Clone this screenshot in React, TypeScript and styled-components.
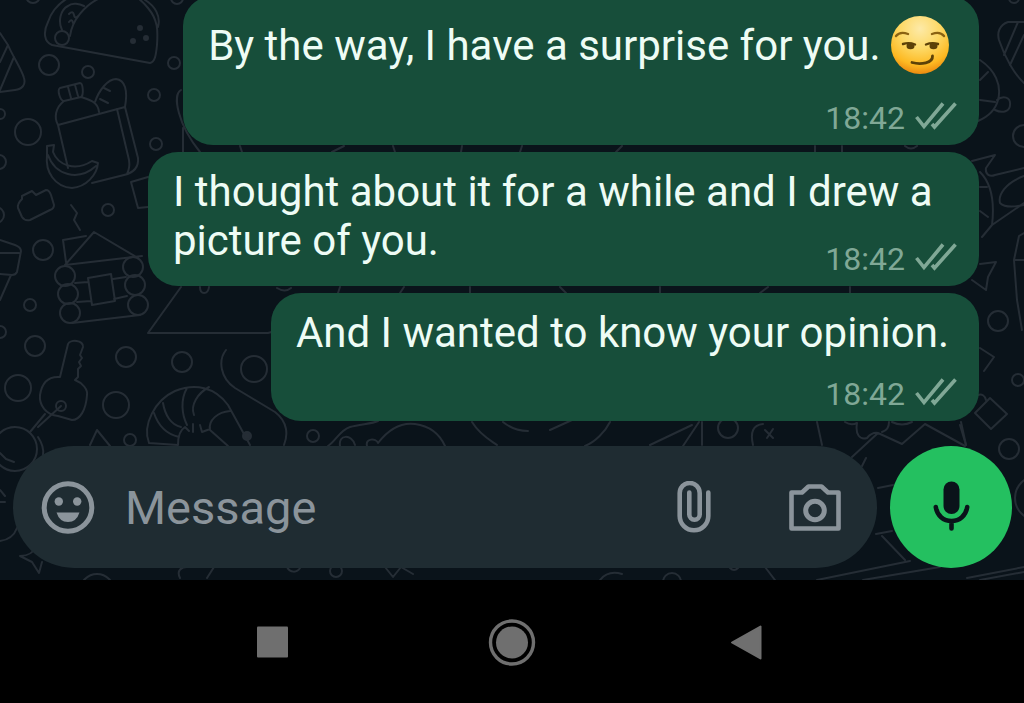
import React from "react";
import styled, { createGlobalStyle } from "styled-components";

const colors = {
  chat: "#0a131a",
  doodle: "#252d35",
  bubble: "#174e3a",
  text: "#eefcf5",
  meta: "#80a896",
  field: "#1f2c32",
  icon: "#8b949b",
  accent: "#24c060",
  nav: "#6f6f6f",
};

const GlobalStyle = createGlobalStyle`
  * { box-sizing: border-box; }
  body {
    margin: 0;
    background: #000;
    font-family: Roboto, "Liberation Sans", sans-serif;
  }
  svg { display: block; flex: none; }
`;

const Screen = styled.div`
  display: flex;
  flex-direction: column;
  height: 100vh;
`;

const Chat = styled.main`
  position: relative;
  flex: 1;
  min-height: 0;
  display: flex;
  flex-direction: column;
  justify-content: flex-end;
  gap: 25px;
  padding-bottom: 12px;
  overflow: hidden;
  background: ${colors.chat};
`;

const Wallpaper = styled.svg`
  position: absolute;
  left: 0;
  bottom: 0;
  fill: none;
  stroke: ${colors.doodle};
  stroke-width: 2;
  stroke-linecap: round;
  stroke-linejoin: round;
`;

const Messages = styled.section`
  position: relative;
  display: flex;
  flex-direction: column;
  align-items: flex-end;
  gap: 7px;
  padding: 0 45px 0 148px;
`;

const Bubble = styled.article`
  display: flex;
  flex-direction: column;
  flex: none;
  padding: 15px 22px 9px 25px;
  border-radius: 30px;
  background: ${colors.bubble};
`;

const BubbleText = styled.p<{ $tall?: boolean }>`
  margin: 0;
  padding-right: 8px;
  color: ${colors.text};
  font-size: 42px;
  line-height: ${(p) => (p.$tall ? 70 : 49)}px;
`;

const Meta = styled.div<{ $inline?: boolean }>`
  display: flex;
  align-items: center;
  align-self: flex-end;
  gap: 10px;
  margin-top: ${(p) => (p.$inline ? -24 : 19)}px;
  color: ${colors.meta};
  font-size: 32px;
  line-height: 36px;
`;

const EmojiSvg = styled.svg`
  display: inline-block;
  vertical-align: -14px;
`;

const Composer = styled.form`
  position: relative;
  display: flex;
  gap: 13px;
  padding: 0 12px 0 13px;
`;

const Field = styled.div`
  flex: 1;
  min-width: 0;
  display: flex;
  align-items: center;
  height: 122px;
  padding: 0 36px 0 28px;
  border-radius: 61px;
  background: ${colors.field};
  color: ${colors.icon};
`;

const MessageInput = styled.input`
  flex: 1;
  min-width: 0;
  height: 60px;
  margin: 0 30px;
  padding: 0;
  border: 0;
  outline: 0;
  background: transparent;
  color: ${colors.text};
  font: 47px Roboto, "Liberation Sans", sans-serif;
  &::placeholder { color: ${colors.icon}; opacity: 1; }
`;

const IconButton = styled.button`
  display: grid;
  place-items: center;
  flex: none;
  padding: 0;
  border: 0;
  background: none;
  color: inherit;
`;

const CameraButton = styled(IconButton)`
  margin-left: 78px;
`;

const MicButton = styled(IconButton)`
  width: 122px;
  height: 122px;
  border-radius: 50%;
  background: ${colors.accent};
  color: ${colors.chat};
`;

const NavBar = styled.nav`
  display: grid;
  grid-template-columns: repeat(3, 240px);
  justify-content: center;
  flex: none;
  height: 123px;
  background: #000;
  color: ${colors.nav};
`;

const circles: [number, number, number][] = [
  [49, 65, 10], [88, 72, 6], [174, 63, 6], [154, 95, 6], [156, 144, 6],
  [28, 132, 13], [0, 114, 5], [-1, 162, 7], [108, 210, 6], [-4, 215, 8],
  [43, 250, 10], [30, 305, 6], [0, 332, 6], [35, 346, 10], [18, 388, 13],
  [126, 357, 10], [182, 362, 10], [116, 405, 13], [254, 369, 13], [130, 440, 6],
  [65, 276, 10], [68, 294, 10], [70, 313, 10], [133, 267, 10], [135, 285, 10],
  [138, 305, 10], [62, 38, 7], [61, 406, 5], [15, 449, 22], [313, 436, 6],
  [728, 428, 10], [1009, 449, 10], [998, 321, 10], [1018, 380, 6],
  [1024, 136, 11], [1037, 498, 22], [672, 582, 9], [336, 571, 6],
  [97, 591, 17], [1014, -2, 5], [33, -4, 7], [177, -2, 6],
];

const dots: [number, number, number][] = [
  [140, 28, 2], [133, 41, 2], [146, 38, 2], [247, 436, 4],
];

const doodles = [
  // taco
  "M52 45C44 42 43 32 48 22C52 10 60 2 70-3M52 45L150 63C155 62 156 55 157 45C158 30 158 20 148 8C140-2 130-8 120-9M70 36C72 20 85 5 100-2M62 30C58 22 60 10 68 6C72 2 80 4 84 6M69 14q4-4 5 1t5 0M69 22q3-4 4 1M145 0C155 6 161 16 158 27",
  // pizza slice
  "M0 33L8 45C12 55 22 70 24 78C26 85 22 89 15 90L0 92M8 45L0 62M14 57L0 90",
  // grocery bag
  "M60 88L80 83C83 83 84 95 81 97L64 101C60 101 57 90 60 88M68 87l3 11M75 85l3 11M64 101C55 108 54 118 58 125L68 168M81 97C90 100 98 102 99 112M58 125L125 107L138 158C139 168 132 173 124 175L92 183M117 109L129 160C130 166 129 170 127 174M95 102C99 90 108 79 116 79C125 80 128 90 125 107M104 88l6 3M100 99l8 4",
  // bananas
  "M47 146L54 145L53 152C58 165 75 172 92 161L98 163C97 175 86 187 72 188C55 187 45 172 47 155ZM48 155C55 175 78 182 96 166",
  // toy brick and squiggle
  "M18 208C17 204 20 201 22 199L22 196L32 191L36 195L46 190C49 190 50 192 51 195L54 205C54 208 53 209 50 210L30 220C26 221 24 220 22 217ZM71 205L77 213L74 220L80 230",
  "M148 177L131 182L138 208L148 207M181 90C172 95 178 125 200 152M183 128V152",
  // drum
  "M0 240L15 245C20 247 21 249 21 251L17 272C16 274 14 275 12 275L0 274M0 253L19 253M11 275L0 300",
  // log cabin
  "M65 265L94 232L138 258M65 265L142 256M66 262L63 240L86 236M75 283L88 282M113 279L126 277M77 302L91 301M114 299L127 296M72 323L140 315M88 278L111 274L115 301L92 305Z",
  // tent
  "M181 287L148 333H268L275 331M200 287C200 295 208 295 209 287M277 288q8 5 14 0",
  // key
  "M60 377L68 344C70 339 84 340 83 347L80 355l2 3L79 362l2 4L78 369V377L75 380C83 383 88 390 87 395C86 410 80 420 72 420L58 416C46 415 39 405 40 395C42 382 48 376 60 377M61 406L38 427M45 414L30 432M38 437C42 443 44 449 43 455",
  // shrimp
  "M149 443C142 425 155 400 175 391C195 383 215 387 228 405L250 445M163 403C165 415 171 425 181 427M154 413C158 425 166 434 179 437M187 388C180 400 182 415 187 425M209 387C198 393 190 405 194 415M230 411C218 412 208 420 210 430L228 446M149 443L178 445C178 435 180 430 185 427L189 431M193 424v8M200 425l2 7L210 429",
  "M226 350C218 360 220 378 235 388L275 412C288 422 288 435 284 445M90 445L97 430L110 446",
  // row above the composer
  "M328 446C335 442 340 430 350 427C360 424 372 424 378 421M340 446C338 434 352 434 355 445M367 446C365 438 376 438 378 443C388 430 400 422 415 424C430 426 440 435 445 446M472 422C480 435 490 440 497 445M503 422Q514 431 528 431M550 430L572 420M610 422C605 432 595 442 585 446M650 445L692 425M683 446L699 422M702 422V445M753 445C750 432 753 425 763 424M765 430l8 8M773 429l-6 9M817 422L822 445M845 422q6 4 12 1C855 435 860 440 867 438Q872 432 878 433M889 422q0 8-7 10M892 422q10 5 20 0M852 457L878 433L902 444L925 424L965 446M961 422L966 445M866 458l-4 8",
  // right edge
  "M975 413L990 398L1007 414L991 429ZM980 264L996 262L988 277L986 290L972 280M980 348L994 357L984 371M972 161L995 155L986 168C985 175 990 177 995 175L1024 168M980 172C990 182 995 200 992 225L982 237M1024 176C1005 183 998 195 1000 203C1005 208 1015 207 1024 205M992 225L1024 203M1024 233L1019 236L1014 260L1017 300L1022 330M1015 260H1024M980 187h7M980 211l8 6",
  "M1024 22H1008C999 25 997 33 999 40C1005 58 1015 75 1024 83M1010 65L1024 35M1004 55L1018 22M980 60C995 70 1002 85 998 100C995 112 985 118 978 121M980 100L995 102M997 100C1003 95 1011 97 1010 105C1010 111 1003 114 995 110M980 80L988 72M978 395q6-2 8 5M960 425l6 20",
  // around and below the composer
  "M878 488L893 485M876 534L892 531M882 536L905 560M817 580L910 561M863 580L940 567M967 578L1024 567M980 580L1024 572M765 567L775 580M20 556C28 556 34 552 36 546M20 556L32 562L39 573L42 562M0 541C8 540 14 536 17 528M180 578C176 570 182 567 187 567M207 578L214 567M287 567C290 573 297 573 300 568M0 453l6 6l8 3M0 490l5 6M0 502h5M385 567l8 10l8-10l12 7M600 580q8-10 22-6M730 568q4 4 8 0",
  // slivers between bubbles
  "M240 146l2 6M332 152l12-6M393 146l2 6M462 146l-1 6M522 146l-2 6M616 152l6-6M815 146v6M842 146v6M905 146q6 5 12 0M340 287l-2 6M400 293l4-6M470 287v6M560 287l6 6M660 287v6M760 293l8-6M850 287v6",
];

const Doodles = () => (
  <Wallpaper width="1024" height="580" viewBox="0 0 1024 580" aria-hidden="true">
    {doodles.map((d) => (
      <path key={d} d={d} />
    ))}
    {circles.map(([x, y, r]) => (
      <circle key={`${x},${y}`} cx={x} cy={y} r={r} />
    ))}
    {dots.map(([x, y, r]) => (
      <circle key={`${x},${y}`} cx={x} cy={y} r={r} fill={colors.doodle} />
    ))}
  </Wallpaper>
);

const Smirk = () => (
  <EmojiSvg width="58" height="58" viewBox="0 0 58 58" role="img" aria-label="Smirking face">
    <defs>
      <radialGradient id="face" cx="50%" cy="22%" r="78%">
        <stop offset="0" stopColor="#fdeaa8" />
        <stop offset="0.45" stopColor="#fdd864" />
        <stop offset="0.8" stopColor="#fdb922" />
        <stop offset="1" stopColor="#ec8a10" />
      </radialGradient>
    </defs>
    <circle cx="29" cy="29" r="29" fill="url(#face)" />
    <g fill="none" stroke="#5d4108" strokeLinecap="round">
      <path d="M5 20Q9 15 17 18" strokeWidth="2.4" stroke="#8a6212" />
      <path d="M41 18Q49 15 53 20" strokeWidth="2.4" stroke="#8a6212" />
      <path d="M12 28Q18 26 24 28.500" strokeWidth="2.4" />
      <path d="M35 28.500Q41 26 47 28" strokeWidth="2.4" />
      <path d="M21 46.500C30 49 42 47 41.500 40" strokeWidth="2.8" />
    </g>
    <ellipse cx="19.500" cy="30" rx="4" ry="3.200" fill="#5d4108" />
    <ellipse cx="42.500" cy="30" rx="4" ry="3.200" fill="#5d4108" />
  </EmojiSvg>
);

const Ticks = () => (
  <svg width="42" height="32" viewBox="0 0 42 32" fill="none" stroke="currentColor" strokeWidth="3.6" role="img" aria-label="Delivered">
    <path d="M1.500 15L9 24.500L28 1.500M17 22L19.500 25L40.500 1.500" />
  </svg>
);

const SmileIcon = () => (
  <svg width="54" height="54" viewBox="0 0 54 54">
    <circle cx="27" cy="27.500" r="23.800" fill="none" stroke="currentColor" strokeWidth="5" />
    <circle cx="17.800" cy="21.500" r="4.200" fill="currentColor" />
    <circle cx="36.200" cy="21.500" r="4.200" fill="currentColor" />
    <path d="M15.500 32.500H38.500Q35.500 42 27 42T15.500 32.500Z" fill="currentColor" />
  </svg>
);

const ClipIcon = () => (
  <svg width="34" height="52" viewBox="0 0 34 52" fill="none" stroke="currentColor" strokeWidth="4.600" strokeLinecap="round">
    <path d="M31.300 11.500V35A14.300 14.300 0 0 1 2.700 35V12A10 10 0 0 1 22.700 12V33.500A5.200 5.200 0 0 1 12.300 33.500V11.500" />
  </svg>
);

const CameraIcon = () => (
  <svg width="52" height="52" viewBox="0 0 52 52" fill="none" stroke="currentColor" strokeWidth="4.600" strokeLinejoin="round">
    <path d="M2.500 11.500H13L19.500 5.500H32.500L39 11.500H49.500V47.500H2.500Z" />
    <circle cx="26" cy="29.500" r="9.300" strokeWidth="5" />
  </svg>
);

const MicIcon = () => (
  <svg width="38" height="52" viewBox="0 0 38 52" fill="none" stroke="currentColor" strokeWidth="4.600" strokeLinecap="round">
    <rect x="11.500" y="0.500" width="16" height="32.500" rx="8" fill="currentColor" stroke="none" />
    <path d="M3.800 26C5 34.500 11.500 40 19.500 40S34 34.500 35.200 26M19.500 40V47.500" />
  </svg>
);

type MessageProps = { time: string; tall?: boolean; inlineMeta?: boolean; children: React.ReactNode };

const Message = ({ time, tall, inlineMeta, children }: MessageProps) => (
  <Bubble>
    <BubbleText $tall={tall}>{children}</BubbleText>
    <Meta $inline={inlineMeta}>
      <time>{time}</time>
      <Ticks />
    </Meta>
  </Bubble>
);

export default function App() {
  return (
    <Screen>
      <GlobalStyle />
      <Chat>
        <Doodles />
        <Messages>
          <Message time="18:42" tall>
            By the way, I have a surprise for you. <Smirk />
          </Message>
          <Message time="18:42" inlineMeta>
            I thought about it for a while and I drew a picture of you.
          </Message>
          <Message time="18:42">And I wanted to know your opinion.</Message>
        </Messages>
        <Composer onSubmit={(e) => e.preventDefault()}>
          <Field>
            <IconButton type="button" aria-label="Emoji"><SmileIcon /></IconButton>
            <MessageInput type="text" aria-label="Message" placeholder="Message" />
            <IconButton type="button" aria-label="Attach"><ClipIcon /></IconButton>
            <CameraButton type="button" aria-label="Camera"><CameraIcon /></CameraButton>
          </Field>
          <MicButton type="button" aria-label="Record voice message"><MicIcon /></MicButton>
        </Composer>
      </Chat>
      <NavBar aria-label="System navigation">
        <IconButton type="button" aria-label="Recent apps">
          <svg width="48" height="48" viewBox="0 0 48 48" fill="currentColor">
            <rect x="9" y="8.500" width="31" height="31" rx="1" />
          </svg>
        </IconButton>
        <IconButton type="button" aria-label="Home">
          <svg width="48" height="48" viewBox="0 0 48 48" fill="currentColor">
            <circle cx="24" cy="24.500" r="16" />
            <circle cx="24" cy="24.500" r="21.500" fill="none" stroke="currentColor" strokeWidth="3.400" />
          </svg>
        </IconButton>
        <IconButton type="button" aria-label="Back">
          <svg width="48" height="48" viewBox="0 0 48 48" fill="currentColor" stroke="currentColor" strokeWidth="2" strokeLinejoin="round">
            <path d="M4 24.500L32.500 8.500V40.500Z" />
          </svg>
        </IconButton>
      </NavBar>
    </Screen>
  );
}
